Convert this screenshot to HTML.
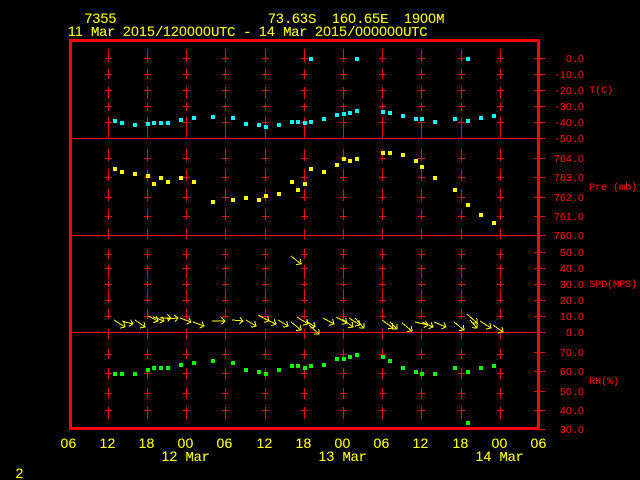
<!DOCTYPE html>
<html><head><meta charset="utf-8"><style>
html,body{margin:0;padding:0;background:#000;width:640px;height:480px;overflow:hidden}
svg{display:block}
text{font-family:"Liberation Sans",sans-serif;white-space:pre}
.y{fill:#ff0;stroke:#ff0;stroke-width:.08px;font-size:14px;letter-spacing:.214px}
.r{fill:#f00;stroke:#f00;stroke-width:.08px;font-size:10.5px;letter-spacing:.16px}
.ym{font-family:"Liberation Mono",monospace;font-size:14px;letter-spacing:-.4px}
.rm{font-family:"Liberation Mono",monospace;font-size:10.5px;letter-spacing:-.3px}
.e{text-anchor:end}
</style></head><body>
<svg width="640" height="480" viewBox="0 0 640 480" xmlns="http://www.w3.org/2000/svg">
<defs>
<path id="c" fill="#f00" shape-rendering="crispEdges" d="M0 49h1v13h-1zM0 69h1v10h-1zM0 87h1v12h-1zM0 103h1v8h-1zM0 117h1v21h-1zM0 149h1v12h-1zM0 169h1v12h-1zM0 189h1v12h-1zM0 209h1v11h-1zM0 229h1v10h-1zM0 249h1v10h-1zM0 265h1v14h-1zM0 281h1v6h-1zM0 289h1v14h-1zM0 309h1v10h-1zM0 329h1v10h-1zM0 349h1v10h-1zM0 368h1v11h-1zM0 388h1v11h-1zM0 407h1v12h-1zM-3 58h7v1h-7zM-3 74h7v1h-7zM-3 90h7v1h-7zM-3 106h7v1h-7zM-3 122h7v1h-7zM-3 158h7v1h-7zM-3 177h7v1h-7zM-3 197h7v1h-7zM-3 216h7v1h-7zM-3 254h7v1h-7zM-3 268h7v1h-7zM-3 284h7v1h-7zM-3 300h7v1h-7zM-3 316h7v1h-7zM-3 354h7v1h-7zM-3 373h7v1h-7zM-3 393h7v1h-7zM-3 410h7v1h-7z"/>
<marker id="h" markerUnits="userSpaceOnUse" markerWidth="12" markerHeight="12" refX="6" refY="6" orient="auto" overflow="visible"><path d="M2.5 2.5L6 6L2.5 9.5" fill="none" stroke="#ff0" stroke-width="1" shape-rendering="crispEdges"/></marker>
</defs>
<rect width="640" height="480" fill="#000"/>
<use href="#c" x="108"/><use href="#c" x="147"/><use href="#c" x="186"/><use href="#c" x="225"/><use href="#c" x="265"/><use href="#c" x="304"/><use href="#c" x="343"/><use href="#c" x="382"/><use href="#c" x="421"/><use href="#c" x="461"/><use href="#c" x="500"/>
<path fill="#f00" shape-rendering="crispEdges" d="M71 138h466v1h-466zM71 235h466v1h-466zM71 332h466v1h-466zM69 39h471v3h-471zM69 427h471v3h-471zM69 39h3v391h-3zM537 39h3v391h-3zM534 58h11v1h-11zM534 74h11v1h-11zM534 90h11v1h-11zM534 106h11v1h-11zM534 122h11v1h-11zM534 138h11v1h-11zM534 158h11v1h-11zM534 177h11v1h-11zM534 197h11v1h-11zM534 216h11v1h-11zM534 235h11v1h-11zM534 252h11v1h-11zM534 268h11v1h-11zM534 284h11v1h-11zM534 300h11v1h-11zM534 316h11v1h-11zM534 332h11v1h-11zM534 352h11v1h-11zM534 371h11v1h-11zM534 391h11v1h-11zM534 410h11v1h-11zM534 429h11v1h-11z"/>
<path fill="#0ff" shape-rendering="crispEdges" d="M113 119h4v4h-4zM120 121h4v4h-4zM133 123h4v4h-4zM146 122h4v4h-4zM152 121h4v4h-4zM159 121h4v4h-4zM166 121h4v4h-4zM179 118h4v4h-4zM192 116h4v4h-4zM211 115h4v4h-4zM231 116h4v4h-4zM244 122h4v4h-4zM257 123h4v4h-4zM264 125h4v4h-4zM277 123h4v4h-4zM290 120h4v4h-4zM296 120h4v4h-4zM303 121h4v4h-4zM309 120h4v4h-4zM309 57h4v4h-4zM322 117h4v4h-4zM335 113h4v4h-4zM342 112h4v4h-4zM348 111h4v4h-4zM355 109h4v4h-4zM355 57h4v4h-4zM381 110h4v4h-4zM388 111h4v4h-4zM401 114h4v4h-4zM414 117h4v4h-4zM420 117h4v4h-4zM433 120h4v4h-4zM453 117h4v4h-4zM466 119h4v4h-4zM466 57h4v4h-4zM479 116h4v4h-4zM492 114h4v4h-4z"/>
<path fill="#ff0" shape-rendering="crispEdges" d="M113 167h4v4h-4zM120 170h4v4h-4zM133 172h4v4h-4zM146 174h4v4h-4zM152 182h4v4h-4zM159 176h4v4h-4zM166 180h4v4h-4zM179 176h4v4h-4zM192 180h4v4h-4zM211 200h4v4h-4zM231 198h4v4h-4zM244 196h4v4h-4zM257 198h4v4h-4zM264 194h4v4h-4zM277 192h4v4h-4zM290 180h4v4h-4zM296 188h4v4h-4zM303 182h4v4h-4zM309 167h4v4h-4zM322 170h4v4h-4zM335 163h4v4h-4zM342 157h4v4h-4zM348 159h4v4h-4zM355 157h4v4h-4zM381 151h4v4h-4zM388 151h4v4h-4zM401 153h4v4h-4zM414 159h4v4h-4zM420 165h4v4h-4zM433 176h4v4h-4zM453 188h4v4h-4zM466 203h4v4h-4zM479 213h4v4h-4zM492 221h4v4h-4z"/>
<path fill="#0f0" shape-rendering="crispEdges" d="M113 372h4v4h-4zM120 372h4v4h-4zM133 372h4v4h-4zM146 368h4v4h-4zM152 366h4v4h-4zM159 366h4v4h-4zM166 366h4v4h-4zM179 363h4v4h-4zM192 361h4v4h-4zM211 359h4v4h-4zM231 361h4v4h-4zM244 368h4v4h-4zM257 370h4v4h-4zM264 372h4v4h-4zM277 368h4v4h-4zM290 364h4v4h-4zM296 364h4v4h-4zM303 366h4v4h-4zM309 364h4v4h-4zM322 363h4v4h-4zM335 357h4v4h-4zM342 357h4v4h-4zM348 355h4v4h-4zM355 353h4v4h-4zM381 355h4v4h-4zM388 359h4v4h-4zM401 366h4v4h-4zM414 370h4v4h-4zM420 372h4v4h-4zM433 372h4v4h-4zM453 366h4v4h-4zM466 370h4v4h-4zM466 421h4v4h-4zM479 366h4v4h-4zM492 364h4v4h-4z"/>
<g stroke="#ff0" stroke-width="1" fill="none" shape-rendering="crispEdges">
<line x1="114" y1="320" x2="125" y2="327" marker-end="url(#h)"/><line x1="122" y1="321" x2="133" y2="324" marker-end="url(#h)"/><line x1="135" y1="320" x2="145" y2="327" marker-end="url(#h)"/><line x1="148" y1="316" x2="158" y2="321" marker-end="url(#h)"/><line x1="153" y1="317" x2="164" y2="321" marker-end="url(#h)"/><line x1="160" y1="318" x2="171" y2="318" marker-end="url(#h)"/><line x1="167" y1="319" x2="178" y2="318" marker-end="url(#h)"/><line x1="180" y1="318" x2="191" y2="322" marker-end="url(#h)"/><line x1="193" y1="322" x2="204" y2="326" marker-end="url(#h)"/><line x1="212" y1="321" x2="225" y2="321" marker-end="url(#h)"/><line x1="232" y1="320" x2="243" y2="321" marker-end="url(#h)"/><line x1="246" y1="320" x2="256" y2="326" marker-end="url(#h)"/><line x1="258" y1="315" x2="269" y2="321" marker-end="url(#h)"/><line x1="265" y1="319" x2="276" y2="324" marker-end="url(#h)"/><line x1="278" y1="320" x2="288" y2="326" marker-end="url(#h)"/><line x1="291" y1="322" x2="301" y2="330" marker-end="url(#h)"/><line x1="297" y1="317" x2="308" y2="324" marker-end="url(#h)"/><line x1="291" y1="256" x2="301" y2="264" marker-end="url(#h)"/><line x1="306" y1="321" x2="315" y2="327" marker-end="url(#h)"/><line x1="309" y1="325" x2="319" y2="334" marker-end="url(#h)"/><line x1="323" y1="318" x2="334" y2="324" marker-end="url(#h)"/><line x1="336" y1="317" x2="347" y2="323" marker-end="url(#h)"/><line x1="342" y1="319" x2="353" y2="327" marker-end="url(#h)"/><line x1="349" y1="318" x2="360" y2="325" marker-end="url(#h)"/><line x1="355" y1="318" x2="364" y2="328" marker-end="url(#h)"/><line x1="382" y1="320" x2="393" y2="328" marker-end="url(#h)"/><line x1="390" y1="322" x2="397" y2="329" marker-end="url(#h)"/><line x1="402" y1="323" x2="412" y2="331" marker-end="url(#h)"/><line x1="415" y1="322" x2="428" y2="325" marker-end="url(#h)"/><line x1="422" y1="322" x2="433" y2="327" marker-end="url(#h)"/><line x1="434" y1="322" x2="446" y2="327" marker-end="url(#h)"/><line x1="454" y1="322" x2="464" y2="330" marker-end="url(#h)"/><line x1="467" y1="314" x2="477" y2="323" marker-end="url(#h)"/><line x1="470" y1="320" x2="477" y2="328" marker-end="url(#h)"/><line x1="480" y1="321" x2="491" y2="328" marker-end="url(#h)"/><line x1="493" y1="325" x2="503" y2="332" marker-end="url(#h)"/>
</g>
<text class="y" x="84.5" y="23">7355</text>
<text class="y" x="268" y="23">73<tspan class="ym">.</tspan>63<tspan class="ym">S  </tspan>160<tspan class="ym">.</tspan>65<tspan class="ym">E  </tspan>1900<tspan class="ym">M</tspan></text>
<text class="y" x="68" y="36">11<tspan class="ym"> Mar </tspan>2015<tspan class="ym">/</tspan>120000<tspan class="ym">UTC - </tspan>14<tspan class="ym"> Mar </tspan>2015<tspan class="ym">/</tspan>000000<tspan class="ym">UTC</tspan></text>
<text class="y" x="60.5" y="448">06</text><text class="y" x="99.5" y="448">12</text><text class="y" x="138.5" y="448">18</text><text class="y" x="177.5" y="448">00</text><text class="y" x="216.5" y="448">06</text><text class="y" x="256.5" y="448">12</text><text class="y" x="295.5" y="448">18</text><text class="y" x="334.5" y="448">00</text><text class="y" x="373.5" y="448">06</text><text class="y" x="412.5" y="448">12</text><text class="y" x="452.5" y="448">18</text><text class="y" x="491.5" y="448">00</text><text class="y" x="530.5" y="448">06</text>
<text class="y" x="161.5" y="461">12<tspan class="ym"> Mar</tspan></text><text class="y" x="318.5" y="461">13<tspan class="ym"> Mar</tspan></text><text class="y" x="475.5" y="461">14<tspan class="ym"> Mar</tspan></text>
<text class="y" x="15.5" y="478">2</text>
<text class="r e" x="584" y="62">0<tspan class="rm">.</tspan>0</text><text class="r e" x="584" y="78"><tspan class="rm">-</tspan>10<tspan class="rm">.</tspan>0</text><text class="r e" x="584" y="94"><tspan class="rm">-</tspan>20<tspan class="rm">.</tspan>0</text><text class="r e" x="584" y="110"><tspan class="rm">-</tspan>30<tspan class="rm">.</tspan>0</text><text class="r e" x="584" y="126"><tspan class="rm">-</tspan>40<tspan class="rm">.</tspan>0</text><text class="r e" x="584" y="142"><tspan class="rm">-</tspan>50<tspan class="rm">.</tspan>0</text>
<text class="r e" x="584" y="162">764<tspan class="rm">.</tspan>0</text><text class="r e" x="584" y="181">763<tspan class="rm">.</tspan>0</text><text class="r e" x="584" y="201">762<tspan class="rm">.</tspan>0</text><text class="r e" x="584" y="220">761<tspan class="rm">.</tspan>0</text><text class="r e" x="584" y="239">760<tspan class="rm">.</tspan>0</text>
<text class="r e" x="584" y="256">50<tspan class="rm">.</tspan>0</text><text class="r e" x="584" y="272">40<tspan class="rm">.</tspan>0</text><text class="r e" x="584" y="288">30<tspan class="rm">.</tspan>0</text><text class="r e" x="584" y="304">20<tspan class="rm">.</tspan>0</text><text class="r e" x="584" y="320">10<tspan class="rm">.</tspan>0</text><text class="r e" x="584" y="336">0<tspan class="rm">.</tspan>0</text>
<text class="r e" x="584" y="356">70<tspan class="rm">.</tspan>0</text><text class="r e" x="584" y="375">60<tspan class="rm">.</tspan>0</text><text class="r e" x="584" y="395">50<tspan class="rm">.</tspan>0</text><text class="r e" x="584" y="414">40<tspan class="rm">.</tspan>0</text><text class="r e" x="584" y="433">30<tspan class="rm">.</tspan>0</text>
<text class="r" x="589" y="93"><tspan class="rm">T(C)</tspan></text><text class="r" x="589" y="190"><tspan class="rm">Pre (mb)</tspan></text><text class="r" x="589" y="287"><tspan class="rm">SPD(MPS)</tspan></text><text class="r" x="589" y="384"><tspan class="rm">RH(%)</tspan></text>
</svg>
</body></html>
